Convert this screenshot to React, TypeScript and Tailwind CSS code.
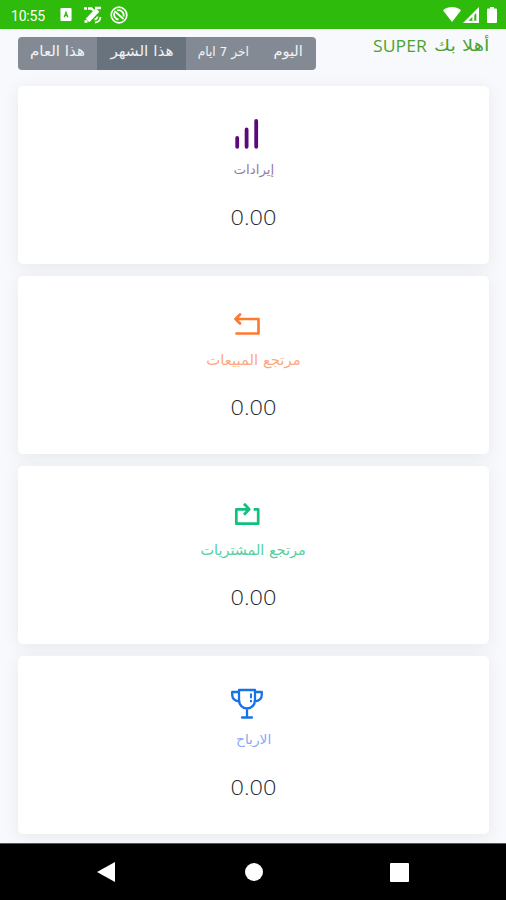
import type { ReactNode } from "react";

const periods = [
    { label: "اليوم", box: "w-[56px]", text: "text-[14px] scale-x-[1.04]", active: false },
    { label: "اخر 7 ايام", box: "w-[74px]", text: "text-[13px] scale-x-[.94]", active: false },
    { label: "هذا الشهر", box: "w-[89px]", text: "text-[14px] scale-x-[1.09]", active: true },
    { label: "هذا العام", box: "w-[79px]", text: "text-[14px] scale-x-[1.08]", active: false },
];

function BarsIcon() {
    return (
        <svg viewBox="0 0 32 32" className="w-8 h-8" fill="none" stroke="#5b0a78" strokeWidth="3.8" strokeLinecap="round">
            <path d="M6.2 20v8.8M15.6 11.5v17.3M25.2 3v25.8" />
        </svg>
    );
}

function SalesReturnIcon() {
    return (
        <svg viewBox="0 0 32 32" className="w-8 h-8" fill="none" stroke="#ff7a2f" strokeWidth="2.7" strokeLinecap="round" strokeLinejoin="round">
            <path d="M4.5 11h23v14.500H5.500M9 6.500L4.500 11L9 15.500" />
        </svg>
    );
}

function PurchaseReturnIcon() {
    return (
        <svg viewBox="0 0 32 32" className="w-8 h-8" fill="none" stroke="#10c07c" strokeWidth="2.7" strokeLinejoin="round">
            <path d="M17.5 11.3H5.3v14.4h21.900V11.300h-4.500M13 5.800l5.200 5.500l-5.200 5.400" />
        </svg>
    );
}

function TrophyIcon() {
    return (
        <svg viewBox="0 0 32 32" className="w-8 h-8" fill="none" stroke="#1672e8" strokeWidth="2.3" strokeLinecap="round" strokeLinejoin="round">
            <path d="M8 2h16v10.500a8 8 0 0 1-16 0zM7.500 4H1.200v2.800c0 4 2.700 6.200 7.300 6.800M24.500 4h6.300v2.800c0 4-2.700 6.200-7.300 6.800M16 20.500v8.300M11 29.500h10" />
            <path d="M20 6.200v3.300M20 12.800v.7" strokeWidth="2" />
        </svg>
    );
}

interface StatCardProps {
    icon: ReactNode;
    label: string;
    labelClass: string;
}

function StatCard({ icon, label, labelClass }: StatCardProps) {
    return (
        <section className="h-[178px] shrink-0 rounded-[5px] bg-white shadow-[0_3px_16px_rgba(75,95,115,0.10)] flex flex-col items-center pt-8">
            <div className="mr-[13px] h-8">{icon}</div>
            <h2 className={`mt-[10px] h-5 leading-5 whitespace-nowrap ${labelClass}`}>{label}</h2>
            <p dir="ltr" className="mt-[21px] text-[21px] leading-8 scale-x-[1.12] text-[#26292c] font-light font-['Open_Sans',sans-serif]">0.00</p>
        </section>
    );
}

function StatusBar() {
    return (
        <header dir="ltr" className="h-[29px] shrink-0 bg-[#2fbb0b] text-white flex items-center pl-[11px] pr-[8px]">
            <span className="text-[14px] leading-none w-[49px] mt-[2px] tracking-[-0.2px] font-[Roboto,sans-serif]">10:55</span>
            <svg viewBox="0 0 12 14" className="w-3 h-[13px]">
                <rect width="12" height="14" rx="1" fill="white" />
                <path d="M4 10L6 4.500l2 5.500M5 8.300h2" fill="none" stroke="#2fbb0b" strokeWidth="1.3" />
            </svg>
            <svg viewBox="0 0 20 18" className="w-5 h-[18px] ml-[11px]" fill="none" stroke="white">
                <path d="M4.500 14.500L14.500 4" strokeWidth="5" />
                <path d="M1 2.500h3M5 2.500h3.500l3 3M12 2h6M1.500 15.500h3" strokeWidth="2.3" />
                <path d="M12 16.500c3-.2 5.200-2.500 5.500-5.500M11.500 13.500c1.700-.2 2.800-1.200 3-3" strokeWidth="1.8" />
            </svg>
            <svg viewBox="0 0 18 18" className="w-[18px] h-[18px] ml-[7px]" fill="none" stroke="white">
                <circle cx="9" cy="9" r="7.8" strokeWidth="1.7" />
                <path d="M4.500 6.500A5 5 0 0 0 8.500 13.500M7 4.500a5 5 0 0 1 6.500 6M4.500 5l9 8" strokeWidth="1.8" />
            </svg>
            <div className="ml-auto flex items-center">
                <svg viewBox="0 0 18 15" className="w-[18px] h-[15px]" fill="white">
                    <path d="M0 3.300C5.300-1.100 12.700-1.100 18 3.300L9 15z" />
                </svg>
                <svg viewBox="0 0 16 16" className="w-4 h-4 ml-[2px]">
                    <path d="M0 16L16 0v16z" fill="white" />
                    <path d="M5.500 13.700L13.300 6v7.700z" fill="#2fbb0b" />
                    <path d="M9.300 13.700V9l2-1.500v6.200z" fill="white" />
                </svg>
                <svg viewBox="0 0 10 16" className="w-[10px] h-4 ml-[8px] mr-px" fill="white">
                    <path d="M3 0h4v1.500h2q1 0 1 1V15q0 1-1 1H1q-1 0-1-1V2.500q0-1 1-1h2z" />
                </svg>
            </div>
        </header>
    );
}

export default function App() {
    return (
        <div dir="rtl" className="w-[506px] h-[900px] overflow-hidden bg-[#f8f9fc] flex flex-col font-['DejaVu_Sans',sans-serif]">
            <StatusBar />

            <main className="h-[814px] shrink-0 overflow-hidden pl-[18px] pr-[17px]">
                <div className="h-[57px] pt-2 flex items-start justify-between">
                    <h1 className="text-[16px] leading-[18px] text-[#4ca333] whitespace-nowrap flex">
                        <span className="origin-right scale-x-[1.22]">أهلا بك</span>
                        <span className="mr-[17px] text-[16px] origin-right scale-x-[1.1] font-['Open_Sans',sans-serif]">SUPER</span>
                    </h1>
                    <div className="flex h-[33px] rounded-[4px] overflow-hidden text-white/90">
                        {periods.map((period) => (
                            <button
                                key={period.label}
                                className={`${period.box} h-full pb-[5px] whitespace-nowrap ${period.active ? "bg-[#68737d]" : "bg-[#838a94]"}`}
                            >
                                <span className={`inline-block leading-5 ${period.text}`}>{period.label}</span>
                            </button>
                        ))}
                    </div>
                </div>

                <div className="flex flex-col gap-[12px]">
                    <StatCard icon={<BarsIcon />} label="إيرادات" labelClass="text-[13px] scale-x-[1.03] text-[#967da5]" />
                    <StatCard icon={<SalesReturnIcon />} label="مرتجع المبيعات" labelClass="text-[14px] scale-x-[1.06] text-[#ffa780]" />
                    <StatCard icon={<PurchaseReturnIcon />} label="مرتجع المشتريات" labelClass="text-[14px] scale-x-[1.03] text-[#55cf9f]" />
                    <StatCard icon={<TrophyIcon />} label="الارباح" labelClass="text-[13px] scale-x-[1.06] text-[#86aaf5]" />
                </div>
            </main>

            {/* Navigation bar */}
            <nav dir="ltr" className="h-[57px] shrink-0 bg-black border-t border-[#55585a] grid grid-cols-[212px_83px_208px] items-center justify-items-center">
                <svg viewBox="0 0 18 20" className="w-[18px] h-5" fill="white"><path d="M0 10L18 0v20z" /></svg>
                <span className="size-[18px] rounded-full bg-white" />
                <span className="size-[19px] rounded-[1px] bg-white" />
            </nav>
        </div>
    );
}
